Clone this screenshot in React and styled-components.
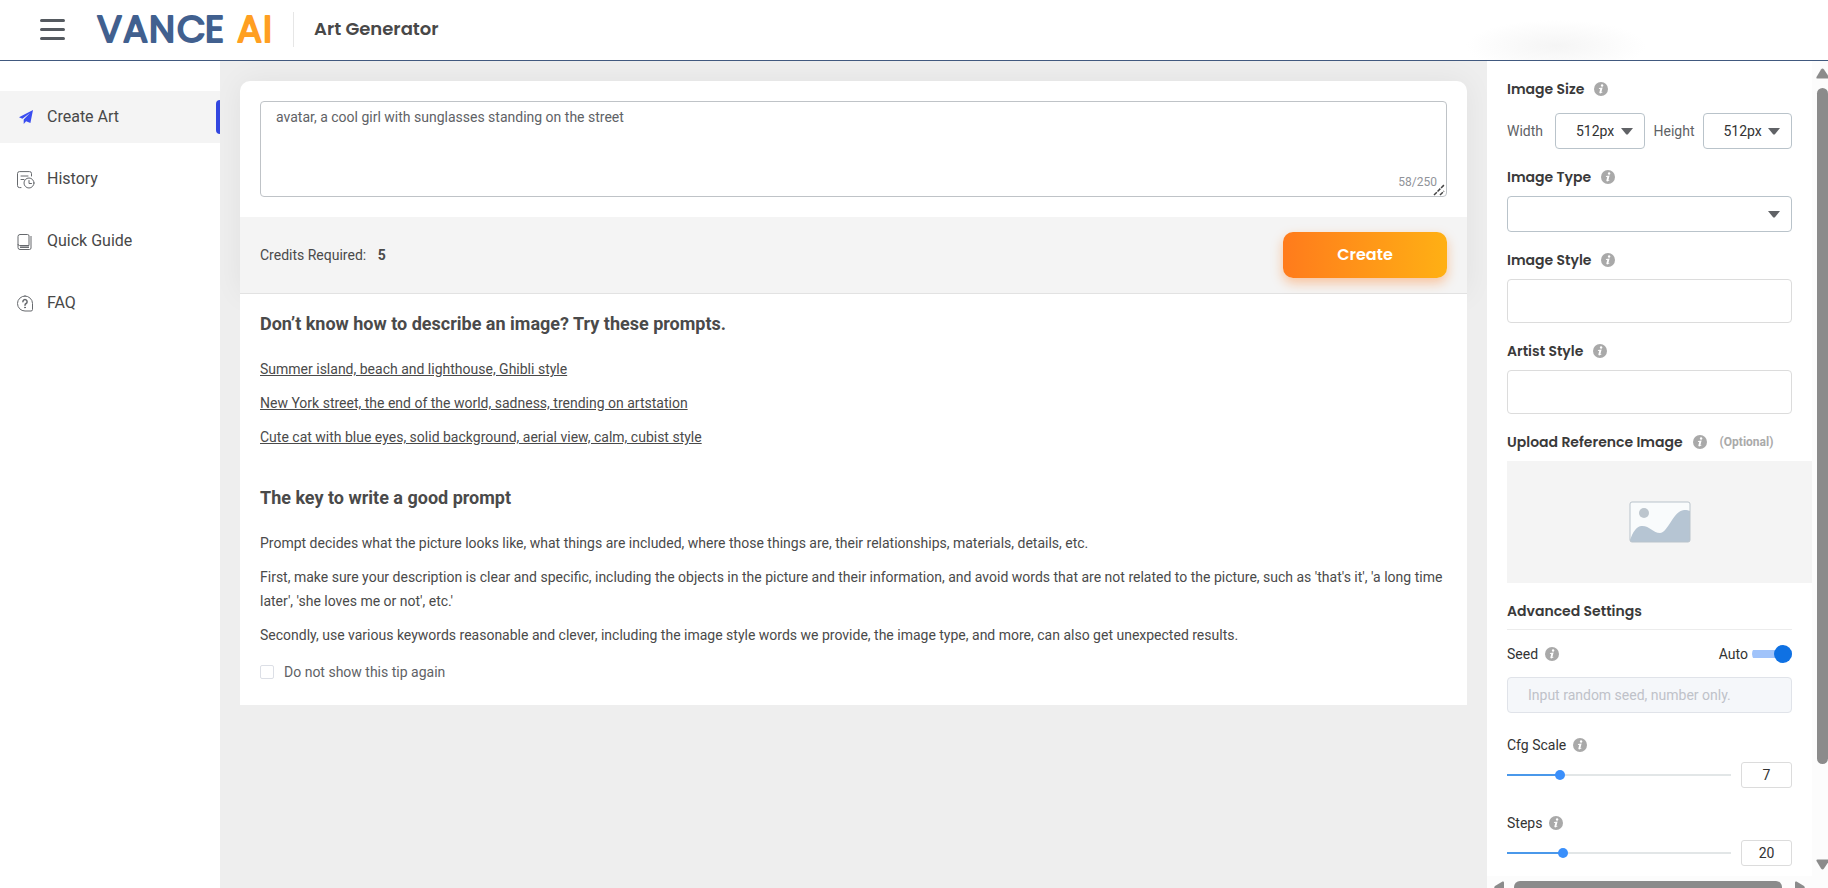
import React, { useState } from "react";
import styled, { createGlobalStyle } from "styled-components";

const sideMenus = [
  { name: "Create Art", icon: "plane" },
  { name: "History", icon: "history" },
  { name: "Quick Guide", icon: "guide" },
  { name: "FAQ", icon: "faq" },
];

const prompts = [
  "Summer island, beach and lighthouse, Ghibli style",
  "New York street, the end of the world, sadness, trending on artstation",
  "Cute cat with blue eyes, solid background, aerial view, calm, cubist style",
];

const MenuIcon = ({ type }) => {
  if (type === "plane") {
    return (
      <svg width="18" height="18" viewBox="0 0 18 18" fill="#3a4df0">
        <path d="M16 2 2 9.3l3.4 1.5L13 5 6.7 11.6V16l2.4-2.8 4.3 1.9z" />
      </svg>
    );
  }
  if (type === "history") {
    return (
      <svg width="18" height="20" viewBox="0 -2 18 20" fill="none" stroke="#66696d" strokeLinecap="round">
        <path d="M14.5 5V2.600a2 2 0 0 0-2-2h-10a2 2 0 0 0-2 2v12a2 2 0 0 0 2 2H4M4 5h7M4 8.500h3" />
        <circle cx="12" cy="12" r="5" />
        <path d="M12 9.500v3h2.500" />
      </svg>
    );
  }
  if (type === "guide") {
    return (
      <svg width="18" height="20" viewBox="0 -2 18 20" fill="none" stroke="#66696d">
        <path d="M3 1.500h7.500a1.500 1.500 0 0 1 1.500 1.500v9.500H2.500a1.500 1.500 0 0 1-1.500-1.500V3.500a2 2 0 0 1 2-2zM1 11v3.500a2 2 0 0 0 2 2h9.500a1.500 1.500 0 0 0 1.500-1.500V3" />
        <path d="M3 14.200h9" strokeWidth="1.500" />
      </svg>
    );
  }
  return (
    <svg width="18" height="20" viewBox="0 -2 18 20" fill="none" stroke="#66696d" strokeLinecap="round">
      <path d="M8 1a7.500 7.500 0 1 0 0 15h6a1.500 1.500 0 0 0 1.500-1.500v-6A7.500 7.500 0 0 0 8 1z" />
      <path d="M5.900 6.700a2.100 2.100 0 1 1 3.200 1.800c-.8.500-1.100.8-1.100 1.700" strokeWidth="1.500" />
      <circle cx="8" cy="12.500" r=".5" fill="#66696d" />
    </svg>
  );
};

const Info = () => (
  <InfoIcon viewBox="0 0 14 14" aria-hidden="true">
    <circle cx="7" cy="7" r="7" fill="#a9a9a9" />
    <circle cx="8.100" cy="3.500" r="1.200" fill="#fff" />
    <path d="M5 6.100 8.600 5.400 7.400 10.200l1.200-.5-.3.900c-1 .8-3.300 1.400-2.900-.3l.9-3.500-1.400.1z" fill="#fff" />
  </InfoIcon>
);

const Caret = () => (
  <CaretIcon viewBox="0 0 12 7" aria-hidden="true">
    <path d="M0 0h12L6.700 6.500h-1.400z" fill="#606266" />
  </CaretIcon>
);

const SelectField = ({ id, value, label }) => (
  <SelectWrap>
    <Select id={id} aria-label={label} defaultValue={value}>
      <option value={value}>{value}</option>
    </Select>
    <Caret />
  </SelectWrap>
);

const SliderField = ({ id, label, min, max, initial }) => {
  const [value, setValue] = useState(initial);
  const rate = (value - min) / (max - min);
  const onChange = (e) => setValue(Number(e.target.value));

  return (
    <SliderGroup>
      <LabelRow>
        <Label htmlFor={id}>{label}</Label>
        <Info />
      </LabelRow>
      <SliderRow>
        <Range
          id={id}
          type="range"
          min={min}
          max={max}
          value={value}
          onChange={onChange}
          style={{ "--rate": `${rate * 100}%` }}
        />
        <NumberBox type="text" aria-label={`${label} value`} value={value} onChange={onChange} />
      </SliderRow>
    </SliderGroup>
  );
};

const App = () => {
  const [text, setText] = useState("avatar, a cool girl with sunglasses standing on the street");

  return (
    <Page>
      <GlobalStyle />
      <Header>
        <MenuButton aria-label="Menu">
          <MenuLine />
          <MenuLine />
          <MenuLine />
        </MenuButton>
        <Logo href="#" aria-label="VanceAI">
          <svg width="180" height="58" viewBox="0 0 180 58">
            <LogoText x="2 28 54 82 110" y="42" $color="#41608f">VANCE</LogoText>
            <LogoText x="142 168" y="42" $color="#ff9f22">AI</LogoText>
          </svg>
        </Logo>
        <HeaderTitle>Art Generator</HeaderTitle>
      </Header>

      <Body>
        <Sidebar>
          {sideMenus.map((menu, i) => (
            <SideItem key={menu.name} href="#" $active={i === 0}>
              <MenuIcon type={menu.icon} />
              {menu.name}
            </SideItem>
          ))}
        </Sidebar>

        <Main>
          <CreateCard>
            <PromptArea>
              <PromptInput
                aria-label="Prompt"
                spellCheck={false}
                value={text}
                onChange={(e) => setText(e.target.value)}
              />
              <Counter>{text.length}/250</Counter>
              <Grip viewBox="0 0 12 12" aria-hidden="true">
                <path d="M1 11 11 1M7 11l4-4" stroke="#444" strokeWidth="1.500" strokeDasharray="4 1" />
              </Grip>
            </PromptArea>
            <CreditBar>
              <Credits>
                Credits Required: <b>5</b>
              </Credits>
              <CreateButton>Create</CreateButton>
            </CreditBar>
          </CreateCard>

          <Tips>
            <TipTitle>Don’t know how to describe an image? Try these prompts.</TipTitle>
            <TipList>
              {prompts.map((prompt) => (
                <li key={prompt}>
                  <PromptLink href="#">{prompt}</PromptLink>
                </li>
              ))}
            </TipList>
            <TipTitle>The key to write a good prompt</TipTitle>
            <TipTexts>
              <p>
                Prompt decides what the picture looks like, what things are included, where those things are,
                their relationships, materials, details, etc.
              </p>
              <p>
                First, make sure your description is clear and specific, including the objects in the picture and
                their information, and avoid words that are not related to the picture, such as 'that's it', 'a
                long time later', 'she loves me or not', etc.'
              </p>
              <p>
                Secondly, use various keywords reasonable and clever, including the image style words we provide,
                the image type, and more, can also get unexpected results.
              </p>
            </TipTexts>
            <HideTip>
              <Check type="checkbox" />
              Do not show this tip again
            </HideTip>
          </Tips>
        </Main>

        <Panel>
          <PanelBody>
            <Section>
              <LabelRow $wide>
                <Title>Image Size</Title>
                <Info />
              </LabelRow>
              <SizeRow>
                <SizeLabel htmlFor="width">Width</SizeLabel>
                <SelectField id="width" value="512px" />
                <SizeLabel htmlFor="height">Height</SizeLabel>
                <SelectField id="height" value="512px" />
              </SizeRow>
            </Section>

            <Section>
              <LabelRow $wide>
                <Title>Image Type</Title>
                <Info />
              </LabelRow>
              <SelectField label="Image Type" value="" />
            </Section>

            <Section>
              <LabelRow $wide>
                <Title as="label" htmlFor="imageStyle">Image Style</Title>
                <Info />
              </LabelRow>
              <StyleInput id="imageStyle" type="text" />
            </Section>

            <Section>
              <LabelRow $wide>
                <Title as="label" htmlFor="artistStyle">Artist Style</Title>
                <Info />
              </LabelRow>
              <StyleInput id="artistStyle" type="text" />
            </Section>

            <Section>
              <LabelRow $wide>
                <Title>Upload Reference Image</Title>
                <Info />
                <Optional>(Optional)</Optional>
              </LabelRow>
              <UploadButton aria-label="Upload Reference Image">
                <svg width="62" height="42" viewBox="0 0 62 42">
                  <rect x="1" y="1" width="60" height="40" rx="2" fill="#f9fbfc" />
                  <path
                    d="M1 39C4 31 7 26 12 25c8-1 12 7 19 7 8 0 13-22 24-23 3 0 5 .5 6 1v29a2 2 0 0 1-2 2H3a2 2 0 0 1-2-2z"
                    fill="#b6c5d3"
                  />
                  <circle cx="15" cy="12" r="5" fill="#bcc5cd" />
                  <rect x="1" y="1" width="60" height="40" rx="2" fill="none" stroke="#b9c3cb" />
                </svg>
              </UploadButton>
            </Section>

            <AdvancedTitle>Advanced Settings</AdvancedTitle>

            <SeedHead>
              <LabelRow>
                <Label htmlFor="seed">Seed</Label>
                <Info />
              </LabelRow>
              <Auto>
                Auto
                <Switch type="checkbox" role="switch" defaultChecked />
              </Auto>
            </SeedHead>
            <SeedInput id="seed" type="text" placeholder="Input random seed, number only." disabled />

            <SliderField id="cfg" label="Cfg Scale" min={1} max={28} initial={7} />
            <SliderField id="steps" label="Steps" min={1} max={80} initial={20} />
          </PanelBody>

          <ScrollY aria-hidden="true">
            <svg width="12" height="11" viewBox="0 0 12 11">
              <path d="M5 1.500Q6.500-.5 8 1.500L13 9q0 1.500-1 1.500H1.500Q0 10.500.5 9z" fill="#8b8b8b" />
            </svg>
            <ThumbY />
            <svg width="12" height="11" viewBox="0 0 12 11">
              <path d="M5 9.500Q6.500 11.500 8 9.500L13 2q0-1.500-1-1.500H1.500Q0 .5.500 2z" fill="#8b8b8b" />
            </svg>
          </ScrollY>
          <ScrollX aria-hidden="true">
            <svg width="10" height="12" viewBox="0 0 10 12">
              <path d="M1 5Q-.5 6.500 1 8l7 5q2 0 2-1V1.500Q10 0 8.500.5z" fill="#8b8b8b" />
            </svg>
            <ThumbX />
            <svg width="10" height="12" viewBox="0 0 10 12">
              <path d="M9 5q1.500 1.500 0 3l-7 5q-2 0-2-1V1.500Q0 0 1.500.5z" fill="#8b8b8b" />
            </svg>
          </ScrollX>
        </Panel>
      </Body>
    </Page>
  );
};

const GlobalStyle = createGlobalStyle`
  * {
    box-sizing: border-box;
  }
  body {
    margin: 0;
    color: #4a4a4a;
    font-family: Roboto, "Liberation Sans", sans-serif;
    font-size: 14px;
    line-height: 24px;
  }
  button, input, select, textarea {
    font: inherit;
    color: inherit;
    margin: 0;
  }
  h1, h2, h3, p, ul {
    margin: 0;
    padding: 0;
  }
`;

const Page = styled.div`
  display: flex;
  flex-direction: column;
  height: 100vh;
  overflow: hidden;
`;

const Header = styled.header`
  display: flex;
  flex: none;
  align-items: center;
  height: 61px;
  padding: 0 40px 2px;
  border-bottom: 1px solid #41597f;
  background: radial-gradient(ellipse 90px 26px at calc(100% - 272px) 46px, #f5f5f5, #fff);
`;

const MenuButton = styled.button`
  display: flex;
  flex-direction: column;
  gap: 6px;
  padding: 0;
  border: none;
  background: none;
`;

const MenuLine = styled.span`
  width: 25px;
  height: 3px;
  border-radius: 2px;
  background: #555a60;
`;

const Logo = styled.a`
  display: flex;
  margin-left: 30px;
`;

const LogoText = styled.text`
  font-family: Poppins, Lato, sans-serif;
  font-size: 37px;
  font-weight: 400;
  fill: ${(props) => props.$color};
  stroke: ${(props) => props.$color};
  stroke-width: 2px;
  stroke-linejoin: round;
`;

const HeaderTitle = styled.h1`
  margin-left: 18px;
  padding: 0 0 2px 20px;
  border-left: 1px solid #e6e6e6;
  color: #484848;
  font-family: Poppins, Inter, sans-serif;
  font-size: 18px;
  font-weight: 600;
  line-height: 33px;
`;

const Body = styled.div`
  display: flex;
  flex: 1;
  min-height: 0;
`;

const Sidebar = styled.nav`
  display: flex;
  flex: none;
  flex-direction: column;
  gap: 10px;
  width: 220px;
  padding-top: 30px;
  background: #fff;
`;

const SideItem = styled.a`
  display: flex;
  position: relative;
  align-items: center;
  gap: 12px;
  height: 52px;
  padding-left: 17px;
  color: #484848;
  font-size: 16px;
  text-decoration: none;
  background: ${(props) => (props.$active ? "#f4f4f4" : "#fff")};

  &::after {
    content: "";
    display: ${(props) => (props.$active ? "block" : "none")};
    position: absolute;
    top: 9px;
    right: 0;
    width: 4px;
    height: 34px;
    border-radius: 4px 0 0 4px;
    background: #3347e0;
  }
`;

const Main = styled.main`
  flex: 1;
  min-width: 0;
  padding: 20px;
  overflow: hidden;
  background: #eee;
`;

const CreateCard = styled.section`
  border-radius: 10px 10px 0 0;
  background: #fff;
  box-shadow: 0 0 30px rgba(0, 0, 0, 0.06);
`;

const PromptArea = styled.div`
  position: relative;
  padding: 20px;
`;

const PromptInput = styled.textarea`
  display: block;
  width: 100%;
  height: 96px;
  padding: 3px 15px;
  border: 1px solid #bfc3c7;
  border-radius: 4px;
  outline: none;
  resize: none;
  color: #606266;
  background: #fff;
`;

const Counter = styled.span`
  position: absolute;
  right: 30px;
  bottom: 23px;
  color: #909399;
  font-size: 12px;
`;

const Grip = styled.svg`
  position: absolute;
  right: 22px;
  bottom: 21px;
  width: 12px;
  height: 12px;
`;

const CreditBar = styled.div`
  display: flex;
  align-items: center;
  justify-content: space-between;
  height: 77px;
  padding: 0 20px;
  border-bottom: 1px solid #e2e2e2;
  background: #f4f4f4;
`;

const Credits = styled.span`
  b {
    margin-left: 8px;
  }
`;

const CreateButton = styled.button`
  width: 164px;
  height: 46px;
  border: none;
  border-radius: 10px;
  color: #fff;
  font-family: Poppins, Inter, sans-serif;
  font-size: 16px;
  font-weight: 600;
  background: linear-gradient(90deg, #ff7b1c, #ffb014);
  box-shadow: 0 5px 12px rgba(255, 123, 28, 0.4);
`;

const Tips = styled.section`
  position: relative;
  padding: 18px 20px 21px;
  background: #fff;
`;

const TipTitle = styled.h2`
  font-size: 18px;
  font-weight: 700;
  line-height: 24px;
`;

const TipList = styled.ul`
  display: flex;
  flex-direction: column;
  gap: 10px;
  margin: 21px 0 37px;
  list-style: none;
`;

const PromptLink = styled.a`
  color: inherit;
`;

const TipTexts = styled.div`
  display: flex;
  flex-direction: column;
  gap: 10px;
  margin-top: 21px;
`;

const HideTip = styled.label`
  display: flex;
  align-items: center;
  gap: 10px;
  margin-top: 13px;
  color: #606266;
`;

const Check = styled.input`
  appearance: none;
  width: 14px;
  height: 14px;
  border: 1px solid #dcdfe6;
  border-radius: 2px;
  background: #fff;
`;

const Panel = styled.aside`
  display: grid;
  flex: none;
  grid-template-columns: 1fr 16px;
  grid-template-rows: 1fr 12px;
  width: 341px;
  background: #fff;
`;

const PanelBody = styled.div`
  min-height: 0;
  padding: 16px 20px 0;
  overflow: hidden;
`;

const Section = styled.section`
  margin-bottom: 16px;
`;

const LabelRow = styled.div`
  display: flex;
  align-items: center;
  gap: ${(props) => (props.$wide ? "10px" : "7px")};
  height: 24px;
  margin-bottom: ${(props) => (props.$wide ? "7px" : "5px")};
`;

const Title = styled.h3`
  color: #3a3a3a;
  font-family: Poppins, Inter, sans-serif;
  font-size: 14px;
  font-weight: 600;
`;

const Label = styled.label`
  color: #333;
`;

const InfoIcon = styled.svg`
  flex: none;
  width: 14px;
  height: 14px;
`;

const Optional = styled.span`
  margin-left: 3px;
  color: #aaa;
  font-size: 12px;
  font-weight: 700;
`;

const SizeRow = styled.div`
  display: grid;
  grid-template-columns: 39px 1fr 40px 1fr;
  align-items: center;
  gap: 9px;
  padding-top: 5px;
`;

const SizeLabel = styled.label`
  color: #606266;
`;

const SelectWrap = styled.div`
  position: relative;
`;

const Select = styled.select`
  appearance: none;
  display: block;
  width: 100%;
  height: 36px;
  padding: 0 20px;
  border: 1px solid #b9c3ca;
  border-radius: 4px;
  color: #333;
  background: #fff;
`;

const CaretIcon = styled.svg`
  position: absolute;
  top: 15px;
  right: 12px;
  width: 12px;
  height: 7px;
  pointer-events: none;
`;

const StyleInput = styled.input`
  display: block;
  width: 100%;
  height: 44px;
  padding: 0 20px;
  border: 1px solid #dcdcdc;
  border-radius: 4px;
  background: #fff;
`;

const UploadButton = styled.button`
  display: flex;
  align-items: center;
  justify-content: center;
  width: calc(100% + 20px);
  height: 122px;
  border: none;
  background: #f4f4f4;
`;

const AdvancedTitle = styled(Title)`
  margin-bottom: 12px;
  padding-bottom: 6px;
  border-bottom: 1px solid #ececec;
`;

const SeedHead = styled.div`
  display: flex;
  justify-content: space-between;
  margin-bottom: 6px;
`;

const Auto = styled.label`
  display: flex;
  align-items: center;
  gap: 4px;
  height: 24px;
  color: #333;
`;

const Switch = styled.input`
  appearance: none;
  display: flex;
  align-items: center;
  width: 40px;
  height: 18px;
  background: linear-gradient(#a0c3fa, #a0c3fa) center / 100% 8px no-repeat;
  border-radius: 9px;

  &::before {
    content: "";
    width: 18px;
    height: 18px;
    margin-left: auto;
    border-radius: 50%;
    background: #0f71e3;
  }

  &:not(:checked)::before {
    margin-left: 0;
    background: #aaa;
  }
`;

const SeedInput = styled.input`
  display: block;
  width: 100%;
  height: 36px;
  margin-bottom: 20px;
  padding: 0 20px;
  border: 1px solid #e0e3e9;
  border-radius: 4px;
  background: #f5f7fa;

  &::placeholder {
    color: #bfc2c9;
  }
`;

const SliderGroup = styled.div`
  margin-bottom: 23px;
`;

const SliderRow = styled.div`
  display: flex;
  align-items: center;
  gap: 10px;
`;

const Range = styled.input`
  appearance: none;
  flex: 1;
  min-width: 0;
  height: 10px;
  background: linear-gradient(90deg, #4a98ea var(--rate), #e2e6e7 var(--rate)) center / 100% 2px no-repeat;

  &::-webkit-slider-thumb {
    appearance: none;
    width: 10px;
    height: 10px;
    border-radius: 50%;
    background: #3a8ffb;
  }
`;

const NumberBox = styled.input`
  width: 51px;
  height: 26px;
  padding: 0;
  border: 1px solid #dcdcdc;
  border-radius: 3px;
  color: #333;
  text-align: center;
  background: #fff;
`;

const ScrollY = styled.div`
  display: flex;
  flex-direction: column;
  justify-content: space-between;
  align-items: flex-end;
  padding: 7px 0 6px;
  background: #fcfcfc;
`;

const ThumbY = styled.span`
  flex: 1;
  width: 11px;
  margin: 9px 0 95px;
  border-radius: 6px;
  background: #8b8b8b;
`;

const ScrollX = styled.div`
  display: flex;
  grid-column: 1 / 3;
  align-items: flex-start;
  gap: 10px;
  padding: 5px 23px 0 7px;
  overflow: hidden;
  background: #fcfcfc;
`;

const ThumbX = styled.span`
  flex: 1;
  height: 14px;
  margin-right: 3px;
  border-radius: 6px;
  background: #8b8b8b;
`;

export default App;
